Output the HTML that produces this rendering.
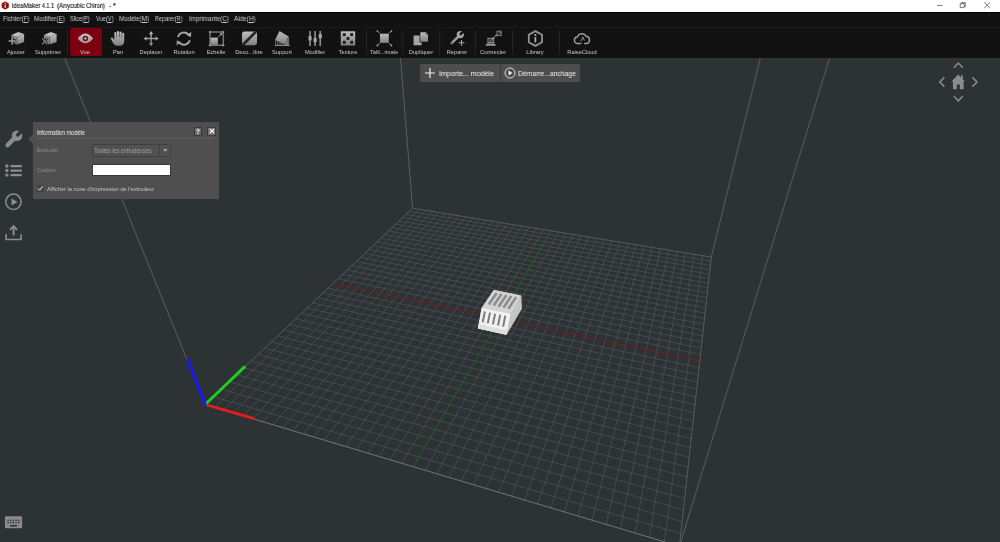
<!DOCTYPE html>
<html><head><meta charset="utf-8"><title>ideaMaker</title>
<style>
html,body{margin:0;padding:0;width:1000px;height:542px;overflow:hidden;background:#2d3235;font-family:"Liberation Sans",sans-serif;}
*{box-sizing:border-box}
#title{position:absolute;left:0;top:0;width:1000px;height:12px;background:#fff;}
#title .t{position:absolute;left:11.7px;top:1.9px;font-size:7px;line-height:8px;color:#111;-webkit-text-stroke:0.12px #111;white-space:nowrap;display:inline-block;transform-origin:0 50%}
#menu{position:absolute;left:0;top:12px;width:1000px;height:14.5px;background:#111;border-top:0.7px solid #000}
#menu span{position:absolute;top:2.3px;font-size:6.8px;line-height:8px;color:#c9ccd2;white-space:nowrap}
#menu u{text-decoration-thickness:0.5px;text-underline-offset:0.6px}
#toolbar{position:absolute;left:0;top:26.5px;width:1000px;height:31.1px;background:#121212;border-top:0.6px solid #171919}
.tb{position:absolute;top:0;height:31.6px;}
.tb .l{position:absolute;left:-30px;width:60px;text-align:center;top:23.3px;font-size:5.6px;line-height:7px;color:#d0d0d0;white-space:nowrap}
.tb svg{position:absolute;left:-10px;top:3px;width:20px;height:20px;overflow:visible}
.sep{position:absolute;top:29px;width:0.6px;height:26px;background:#2a2a2a}
#vue{position:absolute;left:70px;top:28px;width:31.7px;height:28.1px;background:#7c0010;border-radius:2.2px}
#scene{position:absolute;left:0;top:0;width:1000px;height:542px}
#panel{position:absolute;left:33px;top:122.4px;width:186px;height:76.4px;background:#4f4f4f;}
#panel div,#panel span{position:absolute;white-space:nowrap}
.cbtn{position:absolute;top:64px;height:18px;width:79.5px;background:#4e4e4e;color:#f2f2f2;font-size:7.3px}

#tblabels span{position:absolute;top:48.6px;width:60px;margin-left:-30px;text-align:center;font-size:5.7px;line-height:7px;color:#c6c8ca;white-space:nowrap}
#panel .pt{font-size:6.4px;line-height:8px}
#panel .pl{font-size:6.2px;line-height:8px;color:#8d8d8d}
#panel .pb{width:8px;height:8.4px;background:#6a6a6a;border:0.7px solid #3a3a3a}
#panel .q{color:#fff;font-size:6.4px;line-height:7px;font-weight:bold}
.cbtn span{position:absolute;top:5.7px;line-height:8px;white-space:nowrap}
.sx{display:inline-block;transform-origin:0 50%}
span{will-change:transform}
</style></head><body>
<svg id="scene" viewBox="0 0 1000 542">
<path d="M205.2 404.5L64.6 58M412.6 208.2L400.5 58M711.3 257.1L760.3 58M679.4 546.3L829.6 58" stroke="#78797a" stroke-width="0.62" fill="none"/><path d="M214.5 407.3L419.1 209.3M213.4 396.7L680.8 533.7M223.9 410.1L425.6 210.3M221.4 389.2L682.1 521.5M233.5 413.0L432.2 211.4M229.2 381.8L683.4 509.8M243.1 415.8L438.8 212.5M236.7 374.7L684.7 498.5M252.9 418.8L445.4 213.6M244.0 367.8L685.9 487.6M262.7 421.7L452.1 214.7M251.1 361.1L687.0 477.1M272.7 424.7L458.9 215.8M258.0 354.5L688.1 467.0M282.8 427.7L465.7 216.9M264.7 348.1L689.2 457.2M292.9 430.7L472.5 218.0M271.3 342.0L690.3 447.7M303.3 433.8L479.4 219.1M277.7 335.9L691.3 438.6M313.7 436.9L486.4 220.3M283.9 330.0L692.3 429.7M324.2 440.1L493.4 221.4M289.9 324.3L693.2 421.1M334.9 443.3L500.4 222.6M295.8 318.8L694.1 412.8M345.7 446.5L507.5 223.7M301.5 313.3L695.0 404.7M356.6 449.8L514.6 224.9M307.1 308.0L695.9 396.9M367.7 453.1L521.8 226.1M312.6 302.9L696.7 389.3M378.9 456.4L529.1 227.3M317.9 297.8L697.5 381.9M390.2 459.8L536.4 228.5M323.1 292.9L698.3 374.8M401.7 463.3L543.7 229.7M328.2 288.1L699.1 367.8M425.1 470.2L558.6 232.1M338.0 278.8L700.6 354.5M436.9 473.8L566.1 233.3M342.7 274.3L701.3 348.1M449.0 477.4L573.6 234.6M347.4 269.9L701.9 341.9M461.2 481.0L581.3 235.8M351.9 265.7L702.6 335.9M473.5 484.7L588.9 237.1M356.3 261.5L703.3 330.0M486.0 488.5L596.7 238.3M360.6 257.4L703.9 324.2M498.7 492.3L604.5 239.6M364.9 253.4L704.5 318.6M511.5 496.1L612.3 240.9M369.0 249.5L705.1 313.2M524.5 500.0L620.2 242.2M373.1 245.6L705.7 307.9M537.7 503.9L628.2 243.5M377.0 241.9L706.3 302.7M551.0 507.9L636.2 244.8M380.9 238.2L706.8 297.6M564.5 512.0L644.3 246.1M384.7 234.6L707.4 292.7M578.2 516.0L652.5 247.5M388.5 231.0L707.9 287.9M592.1 520.2L660.7 248.8M392.1 227.6L708.4 283.2M606.2 524.4L668.9 250.2M395.7 224.2L708.9 278.6M620.4 528.7L677.3 251.5M399.2 220.9L709.4 274.1M634.9 533.0L685.7 252.9M402.7 217.6L709.9 269.7M649.5 537.4L694.2 254.3M406.0 214.4L710.4 265.4M664.3 541.8L702.7 255.7M409.4 211.3L710.8 261.2" stroke="#656361" stroke-width="0.47" fill="none"/><path d="M413.3 466.7L551.1 230.9" stroke="#1d6b1d" stroke-width="0.9" fill="none"/><path d="M333.2 283.4L699.8 361.1" stroke="#7a1c1c" stroke-width="0.9" fill="none"/><path d="M205.2 404.5L412.6 208.2L711.3 257.1L679.4 546.3" stroke="#7c7b7a" stroke-width="0.55" fill="none"/><path d="M205.2 404.5L679.4 546.3" stroke="#868584" stroke-width="0.8" fill="none"/>
<g stroke-linecap="round">
<path d="M205.2 404.5L253.4 418.4" stroke="#e81c1c" stroke-width="2.8"/>
<path d="M205.2 404.5L244.3 367.1" stroke="#1ecd1e" stroke-width="3"/>
<path d="M205.2 404.5L187.8 360" stroke="#1a1aee" stroke-width="3.2"/>
</g>
<g id="model">
<path d="M478 328.6L481.6 308.1L493.8 289.9L521.1 295.6L521.7 308.8L506.4 334.7Z" fill="#c9c9c9"/>
<path d="M481.6 308.1L493.8 289.9L521.1 295.6L510.5 313.9Z" fill="#d4d4d4"/>
<path d="M510.5 313.9L521.1 295.6L521.7 308.8L506.4 334.7Z" fill="#c4c4c4"/>
<path d="M481.6 308.1L510.5 313.9L506.4 334.7L478 328.6Z" fill="#f1f1f1"/>
<path d="M478.2 324L507 330.2L506.4 334.7L478 328.6Z" fill="#dedede"/>
<g stroke="#8e8e8e" stroke-width="2.7" stroke-linecap="butt"><path d="M496.6 293.0L488.8 304.6M501.5 294.0L493.7 305.6M506.4 295.1L498.6 306.7M511.3 296.1L503.5 307.7M516.2 297.1L508.4 308.7"/></g>
<g stroke="#7c7c7c" stroke-width="2"><path d="M484.9 311.5L482.7 322.2M490.0 312.6L487.8 323.3M495.1 313.7L492.9 324.4M500.2 314.7L498.0 325.5M505.3 315.8L503.1 326.6"/></g>
</g>
<g id="nav" fill="none" stroke="#8b8b8b" stroke-width="1.5">
<path d="M953.8 67.8L958.3 63L962.8 67.8"/>
<path d="M953.8 96L958.3 100.8L962.8 96"/>
<path d="M944.4 77.4L939.8 82L944.4 86.6"/>
<path d="M972.4 77.4L977 82L972.4 86.6"/>
<path d="M951.4 81.6L958.2 74.6L961 77.4V75.2H962.8V79.2L965.2 81.6H963.6V89.2H959.8V84.4H956.8V89.2H953V81.6Z" fill="#8b8b8b" stroke="none"/>
</g>
<g id="lefticons">
<g>
<path d="M7.6 145.1L15.4 137.3" stroke="#8b8b8b" stroke-width="4.4" stroke-linecap="round"/>
<circle cx="17" cy="135.7" r="5.3" fill="#8b8b8b"/>
<path d="M17.7 135L23 129.7" stroke="#2d3235" stroke-width="3.2" stroke-linecap="round"/>
</g>
<g fill="#8b8b8b">
<circle cx="6.9" cy="166" r="1.7"/><circle cx="6.9" cy="170.5" r="1.7"/><circle cx="6.9" cy="175.1" r="1.7"/>
<rect x="10.4" y="164.9" width="11.6" height="2.3" rx="0.9"/><rect x="10.4" y="169.4" width="11.6" height="2.3" rx="0.9"/><rect x="10.4" y="173.9" width="11.6" height="2.3" rx="0.9"/>
</g>
<g>
<circle cx="13.45" cy="201.8" r="7.7" fill="none" stroke="#8b8b8b" stroke-width="1.5"/>
<path d="M11.5 198.2L17.6 201.9L11.5 205.6Z" fill="#8b8b8b"/>
</g>
<g fill="none" stroke="#8b8b8b">
<path d="M6.1 234.2V239.5H21.1V234.2" stroke-width="1.7"/>
<path d="M13.6 226V235.4" stroke-width="2"/>
<path d="M10.1 229.8L13.6 226.1L17.1 229.8" stroke-width="1.9"/>
</g>
<g transform="translate(13.5,522.3)">
<rect x="-8.6" y="-6" width="17.2" height="12" rx="1.4" fill="#8b8b8b"/>
<g fill="#2d3235"><rect x="-6.0" y="-2.6" width="1.4" height="1.4"/><rect x="-6.0" y="-0.4" width="1.4" height="1.4"/><rect x="-3.4" y="-2.6" width="1.4" height="1.4"/><rect x="-3.4" y="-0.4" width="1.4" height="1.4"/><rect x="-0.8" y="-2.6" width="1.4" height="1.4"/><rect x="-0.8" y="-0.4" width="1.4" height="1.4"/><rect x="1.9" y="-2.6" width="1.4" height="1.4"/><rect x="1.9" y="-0.4" width="1.4" height="1.4"/><rect x="4.5" y="-2.6" width="1.4" height="1.4"/><rect x="4.5" y="-0.4" width="1.4" height="1.4"/><rect x="-3.6" y="2.7" width="7.2" height="1.5"/></g>
</g>
</g>

<!--MODEL-->
<!--NAV-->
<!--LEFTICONS-->
</svg>
<div id="title"><span class="t" style="left:12.0px;transform:scaleX(0.875)">ideaMaker</span> <span class="t" style="left:41.9px;transform:scaleX(0.777)">4.1.1</span> <span class="t" style="left:56.6px;transform:scaleX(0.901)">(Anycubic</span> <span class="t" style="left:86.1px;transform:scaleX(0.828)">Chiron)</span> <span class="t" style="left:108.6px;transform:scaleX(1.000)">-</span> <span class="t" style="left:112.9px;transform:scaleX(1.000)">*</span> 
<svg viewBox="0 0 1000 12" style="position:absolute;left:0;top:0;width:1000px;height:12px">
<path d="M5.2 2L8.2 3.7V7.3L5.2 9L2.2 7.3V3.7Z" fill="#8d0d12" stroke="#8d0d12" stroke-width="1.1" stroke-linejoin="round"/>
<rect x="4.7" y="4.7" width="1" height="3.2" fill="#fff"/><circle cx="5.2" cy="3.5" r="0.65" fill="#fff"/>
<path d="M937 5.4H942.4" stroke="#222" stroke-width="0.6"/>
<path d="M960.2 3.6H964.2V7.6H960.2ZM961.4 3.6V2.6H965.3V6.5H964.2" fill="none" stroke="#222" stroke-width="0.6"/>
<path d="M984.2 2.4L990 8.2M990 2.4L984.2 8.2" stroke="#222" stroke-width="0.6"/>
</svg>

</div>
<div id="menu">
<span class="sx" style="left:2.6px;transform:scaleX(0.907)">Fichier(<u>F</u>)</span>
<span class="sx" style="left:34.0px;transform:scaleX(0.923)">Modifier(<u>E</u>)</span>
<span class="sx" style="left:70.0px;transform:scaleX(0.831)">Slice(<u>P</u>)</span>
<span class="sx" style="left:95.7px;transform:scaleX(0.836)">Vue(<u>V</u>)</span>
<span class="sx" style="left:119.1px;transform:scaleX(0.926)">Modèle(<u>M</u>)</span>
<span class="sx" style="left:155.1px;transform:scaleX(0.806)">Reparer(<u>R</u>)</span>
<span class="sx" style="left:188.8px;transform:scaleX(0.918)">Imprimante(<u>C</u>)</span>
<span class="sx" style="left:234.3px;transform:scaleX(0.932)">Aide(<u>H</u>)</span>

</div>
<div id="toolbar"></div>
<div id="vue"></div>
<svg id="tbicons" viewBox="0 0 1000 58" style="position:absolute;left:0;top:0;width:1000px;height:58px">
<defs>
<linearGradient id="g" x1="0" y1="0" x2="0" y2="1"><stop offset="0" stop-color="#bdbdbd"/><stop offset="1" stop-color="#808080"/></linearGradient>
<linearGradient id="gv" x1="0" y1="0" x2="0" y2="1"><stop offset="0" stop-color="#c2c2c2"/><stop offset="1" stop-color="#989898"/></linearGradient>
</defs>
<g fill="#2b2d2e">
<rect x="67" y="30.5" width="0.7" height="24"/><rect x="366.2" y="30.5" width="0.7" height="24"/><rect x="402.4" y="30.5" width="0.7" height="24"/><rect x="439.4" y="30.5" width="0.7" height="24"/><rect x="475.2" y="30.5" width="0.7" height="24"/><rect x="512" y="30.5" width="0.7" height="24"/><rect x="559.3" y="30.5" width="0.7" height="24"/>
</g>
<!-- Ajouter -->
<g transform="translate(17.7,38.3)">
<path d="M-6.3 -3.2L-0.6 -1.4L-0.6 6.2L-6.3 3.8Z" fill="#8a8a8a"/>
<path d="M-0.6 -1.4L6.4 -4.2L6.4 3.6L-0.6 6.2Z" fill="url(#g)"/>
<path d="M-6.3 -3.2L0.6 -6.3L6.4 -4.2L-0.6 -1.4Z" fill="#bdbdbd"/>
<path d="M-0.6 -1.4L-0.6 6.2" stroke="#4a4a4a" stroke-width="0.6"/>
<path d="M-9 2.4H-2M-5.5 -0.6V6.4" stroke="#121212" stroke-width="3"/>
<path d="M-9 2.6H-2M-5.5 -0.6V6.4" stroke="#9e9e9e" stroke-width="1.5"/>
</g>
<!-- Supprimer -->
<g transform="translate(50.2,38.3)">
<path d="M-6.3 -3.2L-0.6 -1.4L-0.6 6.2L-6.3 3.8Z" fill="#8a8a8a"/>
<path d="M-0.6 -1.4L6.4 -4.2L6.4 3.6L-0.6 6.2Z" fill="url(#g)"/>
<path d="M-6.3 -3.2L0.6 -6.3L6.4 -4.2L-0.6 -1.4Z" fill="#bdbdbd"/>
<path d="M-0.6 -1.4L-0.6 6.2" stroke="#4a4a4a" stroke-width="0.6"/>
<path d="M-8 0.2L-3 6M-3 0.2L-8 6" stroke="#121212" stroke-width="2.6"/>
<path d="M-8 0.2L-3 6M-3 0.2L-8 6" stroke="#909090" stroke-width="1.1"/>
</g>
<!-- Vue (eye) -->
<g transform="translate(85.4,38.4)">
<path d="M-7.7 0Q-3.8 -4.8 0 -4.8Q3.8 -4.8 7.7 0Q3.8 4.8 0 4.8Q-3.8 4.8 -7.7 0Z" fill="url(#gv)"/>
<circle r="2.7" fill="#7c0010"/><circle r="1.2" fill="#c0c0c0"/>
</g>
<!-- Pan (hand) -->
<g transform="translate(118.2,38.6) scale(1.08,1)" fill="url(#g)">
<path d="M-3.6 -5.6a1 1 0 0 1 2 0V-1.5H-1.2V-6.6a1 1 0 0 1 2 0V-1.5H1.2V-6.2a1 1 0 0 1 2 0V-1.2H3.6V-4.8a1 1 0 0 1 2 0V2.4Q5.6 7.2 1.2 7.2H-0.8Q-3.4 7.2 -4.6 4.6L-6.9 0.2Q-7.2 -1 -6 -1.2Q-5 -1.2 -4.4 0L-3.6 1.4Z"/>
</g>
<!-- Deplacer -->
<g transform="translate(151.1,38.6)" fill="url(#g)" stroke="none">
<rect x="-6" y="-0.7" width="12" height="1.4"/><rect x="-0.7" y="-6" width="1.4" height="12"/>
<path d="M0 -7.7L2.2 -4.4H-2.2ZM0 7.7L2.2 4.4H-2.2ZM-7.7 0L-4.4 -2.2V2.2ZM7.7 0L4.4 -2.2V2.2Z"/>
</g>
<!-- Rotation -->
<g transform="translate(183.9,38.6)" fill="none" stroke="#a6a6a6" stroke-width="1.9">
<path d="M-5.9 -1.6A6.1 6.1 0 0 1 4.6 -4"/>
<path d="M5.9 1.6A6.1 6.1 0 0 1 -4.6 4"/>
<path d="M7.4 -6.6L7 -1.6L2.6 -3.6Z" fill="#a8a8a8" stroke="none"/>
<path d="M-7.4 6.6L-7 1.6L-2.6 3.6Z" fill="#9a9a9a" stroke="none"/>
</g>
<!-- Echelle -->
<g transform="translate(216.6,38.6)">
<rect x="-6.6" y="-6.6" width="13.2" height="13.2" fill="none" stroke="#a4a4a4" stroke-width="1"/>
<rect x="-6.1" y="-1" width="7.4" height="7.2" fill="url(#g)"/>
<path d="M1.6 -1.4L5 -4.8" stroke="#b4b4b4" stroke-width="1"/>
<path d="M5.6 -5.6L5.2 -3L3 -5.2Z" fill="#b4b4b4"/>
<g fill="#8e8e8e"><circle cx="-6.6" cy="-6.6" r="1.2"/><circle cx="6.6" cy="-6.6" r="1.2"/><circle cx="-6.6" cy="6.6" r="1.2"/><circle cx="6.6" cy="6.6" r="1.2"/></g>
</g>
<!-- Deco..ibre -->
<g transform="translate(249.5,38.4)">
<rect x="-7.5" y="-6.8" width="15" height="13.6" rx="2.4" fill="url(#g)"/>
<path d="M-6.6 6.4L6.2 -6.6" stroke="#121212" stroke-width="2.6"/>
<path d="M-6.6 6.4L6.2 -6.6" stroke="#9a9a9a" stroke-width="0.5" stroke-dasharray="0.9 0.7"/>
</g>
<!-- Support -->
<g transform="translate(282.2,38.5)">
<path d="M-4.7 -7.6L4.4 -2L0.6 6L-9.2 1.5Z" fill="url(#g)" transform="translate(2,0)"/>
<path d="M-6.6 1.6V6.6M-4.4 2.6V6.6M-2.2 3.6V6.6M0 4.6V6.6M6.4 -1.4V6.6" stroke="#999" stroke-width="0.7"/>
<path d="M3.2 5L6.2 -1V6.6H2.6Z" fill="#7c7c7c"/>
<rect x="-7.4" y="6.4" width="15" height="1" fill="#969696"/>
</g>
<!-- Modifier -->
<g transform="translate(315.1,38.5)" fill="#8c8c8c">
<rect x="-5.9" y="-7.5" width="1.7" height="15"/><rect x="-0.85" y="-7.5" width="1.7" height="15"/><rect x="4.3" y="-7.5" width="1.7" height="15"/>
<g fill="#a8a8a8"><rect x="-6.6" y="-2.3" width="3.1" height="4.2"/><rect x="-1.55" y="-0.5" width="3.1" height="4.2"/><rect x="3.6" y="-4.4" width="3.1" height="4.2"/></g>
</g>
<!-- Texture -->
<g transform="translate(348,38.4)">
<rect x="-7.2" y="-7.2" width="14.4" height="14.4" rx="0.6" fill="url(#g)"/>
<g fill="#1c1c1c"><rect x="-5.2" y="-5.2" width="2.9" height="2.9"/><rect x="2.2" y="-5.2" width="2.9" height="2.9"/><rect x="-1.5" y="-1.4" width="2.9" height="2.9"/><rect x="-5.2" y="2.4" width="2.9" height="2.9"/><rect x="2.2" y="2.4" width="2.9" height="2.9"/></g>
</g>
<!-- Taille maximale -->
<g transform="translate(384.4,38.3)">
<rect x="-4.4" y="-4.6" width="8.8" height="9.2" fill="url(#g)"/>
<path d="M-4.6 -4.8L-7 -7.2M4.6 -4.8L7 -7.2M-4.6 4.8L-7 7.2M4.6 4.8L7 7.2" stroke="#a8a8a8" stroke-width="0.9"/>
<g fill="#a8a8a8"><circle cx="-7" cy="-7.2" r="0.9"/><circle cx="7" cy="-7.2" r="0.9"/><circle cx="-7" cy="7.2" r="0.9"/><circle cx="7" cy="7.2" r="0.9"/></g>
</g>
<!-- Dupliquer -->
<g transform="translate(420.8,38.7)">
<path d="M-0.5 -6.4H5L7.2 -4.2V3H-0.5Z" fill="url(#g)"/>
<path d="M5 -6.4V-4.2H7.2" fill="none" stroke="#555" stroke-width="0.5"/>
<path d="M-7.2 -3.3H-1.2V3.7H0.9V6.5H-7.2Z" fill="#a5a5a5"/>
</g>
<!-- Reparer -->
<g>
<path d="M451.7 43.2L458.4 36.5" stroke="#9c9c9c" stroke-width="2.5" stroke-linecap="round"/>
<circle cx="460.3" cy="34.6" r="3.6" fill="#a6a6a6"/>
<path d="M460.7 34.2L465 29.9" stroke="#121212" stroke-width="2.5" stroke-linecap="round"/>
<circle cx="452" cy="42.9" r="0.55" fill="#121212"/>
<path d="M458.6 42.8H464.4M461.5 39.9V45.7" stroke="#a8a8a8" stroke-width="1.05"/>
</g>
<!-- Connecter -->
<g>
<rect x="487.9" y="38.3" width="5.8" height="4.2" fill="#3a3a3a" stroke="#9a9a9a" stroke-width="0.9"/>
<path d="M485.6 45.8L486.5 43.4H495L495.9 45.8Z" fill="#9a9a9a"/>
<path d="M490.3 41.2L496.4 35.1" stroke="#a8a8a8" stroke-width="0.9"/>
<path d="M492.6 38.9L493 36.9L494.7 38.6ZM496.9 34.6L495 34.9L496.6 36.6Z" fill="#a8a8a8"/>
<rect x="497" y="31.2" width="4.2" height="4.4" fill="none" stroke="#8c8c8c" stroke-width="0.9"/>
<path d="M498 34.6L500.4 32.2M499 32.2H500.4V33.6" stroke="#9a9a9a" stroke-width="0.6" fill="none"/>
</g>
<!-- Library -->
<g transform="translate(535.4,38.5)">
<path d="M0 -7.4L6.6 -3.7V3.7L0 7.4L-6.6 3.7V-3.7Z" fill="none" stroke="#939393" stroke-width="1.8" stroke-linejoin="round"/>
<rect x="-0.85" y="-1.6" width="1.7" height="5.6" rx="0.5" fill="#b0b0b0"/><circle cx="0" cy="-3.5" r="1.05" fill="#b8b8b8"/>
</g>
<!-- RaiseCloud -->
<g transform="translate(582.4,38.9)" fill="none" stroke="#9a9a9a" stroke-width="1.5" stroke-linecap="round" stroke-linejoin="round">
<path d="M-1.6 4.6H-4.6A3.2 3.2 0 0 1 -5 -1.8A4.6 4.6 0 0 1 3.6 -2.6A3.7 3.7 0 0 1 4.6 4.6H2.2"/>
<path d="M-1.4 2.2L0.4 -2L1.8 1.2" stroke-width="0.9"/>
</g>
</svg>
<div id="tblabels">
<span style="left:15.7px">Ajouter</span><span style="left:48.3px">Supprimer</span><span style="left:85px">Vue</span><span style="left:118px">Pan</span><span style="left:150.7px">Deplacer</span><span style="left:183.9px">Rotation</span><span style="left:216.4px">Echelle</span><span style="left:249.3px">Deco...ibre</span><span style="left:282px">Support</span><span style="left:314.6px">Modifier</span><span style="left:347.5px">Texture</span><span style="left:384.4px">Taill...imale</span><span style="left:420.7px">Dupliquer</span><span style="left:457px">Reparer</span><span style="left:493.3px">Connecter</span><span style="left:535.4px">Library</span><span style="left:582px">RaiseCloud</span>
</div>

<div id="panel">
<svg style="position:absolute;left:-5.2px;top:11.5px;width:5.4px;height:10px" viewBox="0 0 5.4 10"><path d="M5.4 0L0 5L5.4 10Z" fill="#4f4f4f"/></svg>
<span class="pt sx" style="left:4.4px;top:6.2px;color:#f2f2f2;transform:scaleX(.874)">Information modèle</span>
<div style="left:3.6px;top:15.7px;width:178.8px;height:0.6px;background:#5d5d5d"></div>
<div class="pb" style="left:160.8px;top:4.8px"></div><span class="q" style="left:163.1px;top:5.6px">?</span>
<div class="pb" style="left:174.4px;top:4.8px;width:8.4px;background:#787878"></div>
<svg viewBox="0 0 8 8" style="position:absolute;left:174.6px;top:5px;width:8px;height:8px"><path d="M1.9 1.9L6.1 6.1M6.1 1.9L1.9 6.1" stroke="#fff" stroke-width="1.1"/></svg>
<span class="pl sx" style="left:4.4px;top:23.8px;transform:scaleX(.919)">Extruder</span>
<div style="left:58.9px;top:21.9px;width:79.1px;height:12.3px;background:#515151;border:0.7px solid #3f3f3f;border-radius:1.2px"></div>
<div style="left:126.4px;top:22.5px;width:0.7px;height:11.1px;background:#414141"></div>
<svg viewBox="0 0 6 4" style="position:absolute;left:130px;top:27px;width:4.4px;height:2.8px"><path d="M0 0H6L3 4Z" fill="#a9a9a9"/></svg>
<span class="pl sx" style="left:61.3px;top:24.3px;color:#a3a3a3;font-size:6.3px;transform:scaleX(.894)">Toutes les extrudeuses</span>
<span class="pl sx" style="left:4.4px;top:43.8px;transform:scaleX(.871)">Couleur</span>
<div style="left:59.3px;top:41.5px;width:78.3px;height:11.8px;background:#fff;border:0.6px solid #3a3a3a"></div>
<div style="left:3.9px;top:62.6px;width:7.6px;height:7px;background:#444;border-radius:0.8px"></div>
<svg viewBox="0 0 8 8" style="position:absolute;left:4.4px;top:62.8px;width:6.6px;height:6.6px"><path d="M1.2 4.2L3.2 6.2L7 1.6" stroke="#f4f4f4" stroke-width="1.2" fill="none"/></svg>
<span class="pl sx" style="left:13.7px;top:62.4px;color:#c6c6c6;transform:scaleX(.91)">Afficher la zone d'impression de l'extrudeur</span>
</div>
<div class="cbtn" style="left:419.6px;width:80.4px">
<svg viewBox="0 0 10 10" style="position:absolute;left:5.4px;top:4px;width:10px;height:10px"><path d="M0 5H10M5 0V10" stroke="#f0f0f0" stroke-width="1.2"/></svg>
<span class="sx" style="left:19px;transform:scaleX(0.970)">Importe... modèle</span></div>
<div class="cbtn" style="left:500px;width:79.6px;border-left:0.6px solid #3c3c3c">
<svg viewBox="0 0 12 12" style="position:absolute;left:3.4px;top:3px;width:12px;height:12px"><circle cx="6" cy="6" r="5" fill="none" stroke="#e6e6e6" stroke-width="0.9"/><path d="M4.6 3.6L8.4 6L4.6 8.4Z" fill="#f0f0f0"/></svg>
<span class="sx" style="left:17px;transform:scaleX(0.925)">Démarre...anchage</span></div>

<!--CENTERBTNS-->
</body></html>
